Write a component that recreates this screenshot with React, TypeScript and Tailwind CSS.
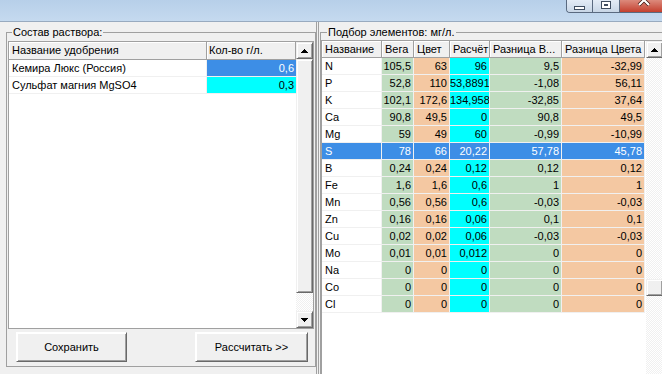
import React from "react";

const raised =
  "bg-[#f0f0f0] border border-[#f0f0f0] border-r-[#696969] border-b-[#696969] shadow-[inset_1px_1px_0_#ffffff,inset_-1px_-1px_0_#a0a0a0]";
const track =
  "bg-[image:repeating-conic-gradient(#f0f0f0_0%_25%,#ffffff_0%_50%)] bg-[length:2px_2px]";
const headerCell =
  "bg-[#f0f0f0] border-r border-b border-[#a0a0a0] shadow-[inset_1px_1px_0_#ffffff] whitespace-nowrap overflow-hidden";

function Arrow({ up }: { up: boolean }) {
  const rows = [0, 1, 2, 3];
  return (
    <svg width="7" height="4" viewBox="0 0 7 4" shapeRendering="crispEdges">
      {rows.map((i) => (
        <rect
          key={i}
          x={3 - i}
          y={up ? i : 3 - i}
          width={2 * i + 1}
          height={1}
          fill="#000"
        />
      ))}
    </svg>
  );
}

function ScrollBtn({ up }: { up: boolean }) {
  return (
    <div className={`h-[17px] w-[17px] shrink-0 flex items-center justify-center ${raised}`}>
      <Arrow up={up} />
    </div>
  );
}

function TitleBar() {
  return (
    <div className="h-[21px] shrink-0 bg-[image:linear-gradient(180deg,#b7cfe9,#c5daef)] flex justify-end items-start">
      <div className="flex h-[13px] mr-[-6px] border-l border-b border-[#5a6a80] rounded-bl-[4px] overflow-hidden">
        <div className="w-[26px] h-full border-r border-[#5a6a80] bg-[image:linear-gradient(180deg,#e4ecf6,#c8d6e6)] flex items-end justify-center pb-[2px]">
          <div className="w-[11px] h-[4px] bg-white border border-[#3f4d60]" />
        </div>
        <div className="w-[27px] h-full border-r border-[#5a6a80] bg-[image:linear-gradient(180deg,#e4ecf6,#c8d6e6)] flex items-start justify-center pt-[1px]">
          <div className="w-[10px] h-[8px] bg-white border border-[#3f4d60] flex items-center justify-center">
            <div className="w-[4px] h-[2px] border border-[#3f4d60]" />
          </div>
        </div>
        <div className="w-[48px] h-full bg-[image:linear-gradient(180deg,#dc8a7c,#c4402f)] flex justify-center overflow-hidden">
          <svg width="14" height="14" viewBox="0 0 14 14" className="mt-[-7px]">
            <path d="M2 2 L12 12 M12 2 L2 12" stroke="#3a1510" strokeWidth="3.6" />
            <path d="M2 2 L12 12 M12 2 L2 12" stroke="#ffffff" strokeWidth="2.2" />
          </svg>
        </div>
      </div>
    </div>
  );
}

function LeftPanel() {
  return (
    <div className="w-[316px] shrink-0 pl-[6px] pt-[4px] pb-[7px] flex flex-col">
      <fieldset className="w-[310px] flex-1 min-h-0 border border-[#a0a0a0] px-[1px] flex flex-col">
        <legend className="ml-[4px] px-[1px] leading-[12px] text-[11px]">Состав раствора:</legend>
        <div className="mt-[3px] h-[288px] shrink-0 border border-[#a0a0a0] bg-white flex">
          <div className="flex-1 flex flex-col min-w-0">
            <div className="h-[18px] flex shrink-0">
              <div className={`w-[198px] pl-[3px] leading-[17px] ${headerCell}`}>Название удобрения</div>
              <div className={`flex-1 pl-[2px] leading-[17px] ${headerCell}`}>Кол-во г/л.</div>
            </div>
            <div className="h-[17px] flex shrink-0">
              <div className="w-[198px] pl-[3px] leading-[16px] border-r border-b border-[#f0f0f0] whitespace-nowrap overflow-hidden">
                Кемира Люкс (Россия)
              </div>
              <div className="flex-1 pr-[2px] text-right leading-[16px] bg-[#3d8ee6] text-white border-b border-[#f0f0f0]">
                0,6
              </div>
            </div>
            <div className="h-[17px] flex shrink-0">
              <div className="w-[198px] pl-[3px] leading-[16px] border-r border-b border-[#f0f0f0] whitespace-nowrap overflow-hidden">
                Сульфат магния MgSO4
              </div>
              <div className="flex-1 pr-[2px] text-right leading-[16px] bg-[#00ffff] border-b border-[#f0f0f0]">
                0,3
              </div>
            </div>
          </div>
          <div className="w-[17px] shrink-0 flex flex-col">
            <ScrollBtn up />
            <div className={`h-[234px] shrink-0 ${raised}`} />
            <div className={`flex-1 ${track}`} />
            <ScrollBtn up={false} />
          </div>
        </div>
        <div className="mt-[3px] flex items-start">
          <button className={`ml-[8px] w-[111px] h-[30px] text-[11px] text-black ${raised} border-t-white border-l-white`}>
            Сохранить
          </button>
          <div className="flex-1" />
          <button className={`mr-[6px] w-[113px] h-[30px] text-[11px] text-black ${raised} border-t-white border-l-white`}>
            Рассчитать &gt;&gt;
          </button>
        </div>
      </fieldset>
    </div>
  );
}

type Row = { n: string; v: string[]; sel?: boolean };

const rows: Row[] = [
  { n: "N", v: ["105,5", "63", "96", "9,5", "-32,99"] },
  { n: "P", v: ["52,8", "110", "53,88913", "-1,08", "56,11"] },
  { n: "K", v: ["102,1", "172,6", "134,9583", "-32,85", "37,64"] },
  { n: "Ca", v: ["90,8", "49,5", "0", "90,8", "49,5"] },
  { n: "Mg", v: ["59", "49", "60", "-0,99", "-10,99"] },
  { n: "S", v: ["78", "66", "20,22", "57,78", "45,78"], sel: true },
  { n: "B", v: ["0,24", "0,24", "0,12", "0,12", "0,12"] },
  { n: "Fe", v: ["1,6", "1,6", "0,6", "1", "1"] },
  { n: "Mn", v: ["0,56", "0,56", "0,6", "-0,03", "-0,03"] },
  { n: "Zn", v: ["0,16", "0,16", "0,06", "0,1", "0,1"] },
  { n: "Cu", v: ["0,02", "0,02", "0,06", "-0,03", "-0,03"] },
  { n: "Mo", v: ["0,01", "0,01", "0,012", "0", "0"] },
  { n: "Na", v: ["0", "0", "0", "0", "0"] },
  { n: "Co", v: ["0", "0", "0", "0", "0"] },
  { n: "Cl", v: ["0", "0", "0", "0", "0"] },
];

const cols = [
  { w: "w-[60px]", bg: "bg-white", h: "Название" },
  { w: "w-[32px]", bg: "bg-[#c0dcc0]", h: "Вега" },
  { w: "w-[36px]", bg: "bg-[#f4c8a2]", h: "Цвет" },
  { w: "w-[40px]", bg: "bg-[#00ffff]", h: "Расчёт" },
  { w: "w-[72px]", bg: "bg-[#c0dcc0]", h: "Разница В..." },
  { w: "w-[83px]", bg: "bg-[#f4c8a2]", h: "Разница Цвета" },
];

function RightPanel() {
  return (
    <div className="flex-1 min-w-0 overflow-hidden pt-[4px]">
      <fieldset className="w-[360px] h-[400px] border border-[#a0a0a0] flex flex-col">
        <legend className="ml-[6px] px-[1px] leading-[12px] text-[11px]">Подбор элементов: мг/л.</legend>
        <div className="mt-[2px] w-[341px] flex-1 border-t border-l border-[#a0a0a0] bg-white flex">
          <div className="w-[323px] shrink-0 flex flex-col">
            <div className="h-[17px] flex shrink-0">
              {cols.map((c, i) => (
                <div key={i} className={`${c.w} shrink-0 pl-[3px] leading-[16px] ${headerCell}`}>
                  {c.h}
                </div>
              ))}
            </div>
            {rows.map((r) => (
              <div key={r.n} className="h-[17px] flex shrink-0">
                <div
                  className={`${cols[0].w} shrink-0 pl-[3px] leading-[16px] border-r border-b border-[#f0f0f0] ${
                    r.sel ? "bg-[#3d8ee6] text-white" : "bg-white"
                  }`}
                >
                  {r.n}
                </div>
                {r.v.map((v, i) => (
                  <div
                    key={i}
                    className={`${cols[i + 1].w} shrink-0 pr-[2px] text-right whitespace-nowrap overflow-hidden leading-[16px] border-r border-b border-[#f0f0f0] ${
                      r.sel ? "bg-[#3d8ee6] text-white" : cols[i + 1].bg
                    }`}
                  >
                    {v}
                  </div>
                ))}
              </div>
            ))}
          </div>
          <div className="w-[17px] shrink-0 ml-[1px] flex flex-col">
            <ScrollBtn up />
            <div className={`h-[221px] shrink-0 ${track}`} />
            <div className={`h-[17px] shrink-0 ${raised}`} />
            <div className={`flex-1 ${track}`} />
          </div>
        </div>
      </fieldset>
    </div>
  );
}

export default function App() {
  return (
    <div className="w-[662px] h-[374px] overflow-hidden bg-[#f0f0f0] font-['Liberation_Sans',Arial,sans-serif] text-[11px] text-black flex flex-col">
      <TitleBar />
      <div className="flex-1 min-h-0 flex border-t border-[#98aabf]">
        <LeftPanel />
        <div className="w-[4px] shrink-0 flex">
          <div className="w-[3px] border-l border-r border-[#a0a0a0]" />
        </div>
        <RightPanel />
      </div>
    </div>
  );
}
